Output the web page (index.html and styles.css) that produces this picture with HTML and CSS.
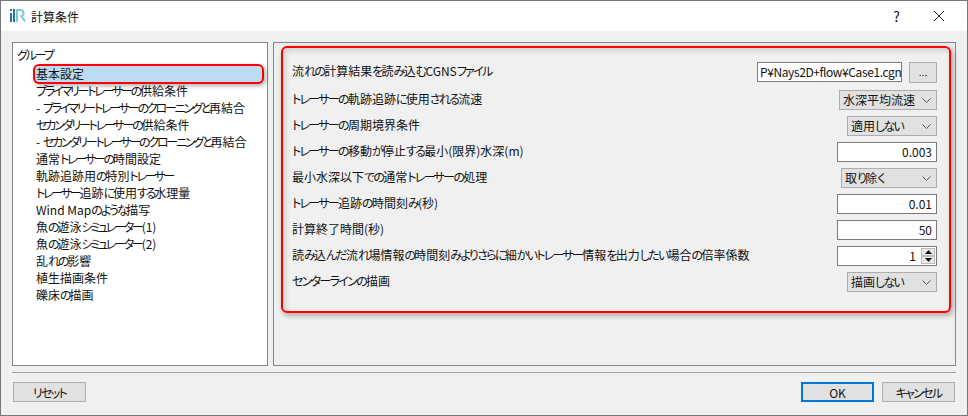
FILE: index.html
```html
<!DOCTYPE html>
<html lang="ja">
<head>
    <meta charset="UTF-8">
    <meta name="viewport" content="width=device-width, initial-scale=1.0">
    <title>計算条件</title>
    <link rel="stylesheet" href="styles.css">
</head>
<body>
    <div class="dialog">
        <div class="titlebar">
            <svg class="app-icon" width="16" height="16" viewBox="0 0 16 16">
                <rect x="0" y="1" width="2" height="2" fill="#2a6fb0"/>
                <rect x="0" y="5" width="2" height="9" fill="#2a6fb0"/>
                <rect x="3" y="1" width="2" height="13" fill="#2a6fb0"/>
                <path d="M7 14V2h3.5a3.2 3.2 0 0 1 1 6.2L15 13.5" fill="none" stroke="#7cc6dc" stroke-width="2"/>
            </svg>
            <span class="title">計算条件</span>
            <span class="help">?</span>
            <svg class="close" width="12" height="12" viewBox="0 0 12 12">
                <path d="M1 1l10 10M11 1L1 11" stroke="#222" stroke-width="1" fill="none"/>
            </svg>
        </div>

        <div class="content">
            <div class="group-panel">
                <div class="group-head"><span class="k">グループ</span></div>
                <ul class="group-list">
                    <li class="selected">基本設定</li>
                    <li><span class="k">プライマリートレーサーの</span>供給条件</li>
                    <li>- <span class="k">プライマリートレーサーのクローニングと</span>再結合</li>
                    <li><span class="k">セカンダリートレーサーの</span>供給条件</li>
                    <li>- <span class="k">セカンダリートレーサーのクローニングと</span>再結合</li>
                    <li>通常<span class="k">トレーサーの</span>時間設定</li>
                    <li>軌跡追跡用<span class="k">の</span>特別<span class="k">トレーサー</span></li>
                    <li><span class="k">トレーサー</span>追跡<span class="k">に</span>使用<span class="k">する</span>水理量</li>
                    <li>Wind Map<span class="k">のような</span>描写</li>
                    <li>魚<span class="k">の</span>遊泳<span class="k">シミュレーター</span>(1)</li>
                    <li>魚<span class="k">の</span>遊泳<span class="k">シミュレーター</span>(2)</li>
                    <li>乱<span class="k">れの</span>影響</li>
                    <li>植生描画条件</li>
                    <li>礫床<span class="k">の</span>描画</li>
                </ul>
            </div>

            <div class="settings-panel">
                <div class="row row-file">
                    <span class="label">流<span class="k">れの</span>計算結果<span class="k">を</span>読<span class="k">み</span>込<span class="k">む</span>CGNS<span class="k">ファイル</span></span>
                    <span class="path-input">P¥Nays2D+flow¥Case1.cgn</span>
                    <button class="browse">...</button>
                </div>
                <div class="row">
                    <span class="label"><span class="k">トレーサーの</span>軌跡追跡<span class="k">に</span>使用<span class="k">される</span>流速</span>
                    <span class="select w-wide">水深平均流速<svg class="chevron" width="9" height="5" viewBox="0 0 9 5"><path d="M.5.5l4 4 4-4" fill="none" stroke="#555"/></svg></span>
                </div>
                <div class="row">
                    <span class="label"><span class="k">トレーサーの</span>周期境界条件</span>
                    <span class="select">適用<span class="k">しない</span><svg class="chevron" width="9" height="5" viewBox="0 0 9 5"><path d="M.5.5l4 4 4-4" fill="none" stroke="#555"/></svg></span>
                </div>
                <div class="row">
                    <span class="label"><span class="k">トレーサーの</span>移動<span class="k">が</span>停止<span class="k">する</span>最小(限界)水深(m)</span>
                    <span class="num-input">0.003</span>
                </div>
                <div class="row">
                    <span class="label">最小水深以下<span class="k">での</span>通常<span class="k">トレーサーの</span>処理</span>
                    <span class="select w-mid">取<span class="k">り</span>除<span class="k">く</span><svg class="chevron" width="9" height="5" viewBox="0 0 9 5"><path d="M.5.5l4 4 4-4" fill="none" stroke="#555"/></svg></span>
                </div>
                <div class="row">
                    <span class="label"><span class="k">トレーサー</span>追跡<span class="k">の</span>時間刻<span class="k">み</span>(秒)</span>
                    <span class="num-input">0.01</span>
                </div>
                <div class="row">
                    <span class="label">計算終了時間(秒)</span>
                    <span class="num-input">50</span>
                </div>
                <div class="row">
                    <span class="label">読<span class="k">み</span>込<span class="k">んだ</span>流<span class="k">れ</span>場情報<span class="k">の</span>時間刻<span class="k">みよりさらに</span>細<span class="k">かいトレーサー</span>情報<span class="k">を</span>出力<span class="k">したい</span>場合<span class="k">の</span>倍率係数</span>
                    <span class="num-input spin-input">1
                        <span class="spin">
                            <span class="spin-btn"><svg width="7" height="4" viewBox="0 0 7 4"><path d="M3.5 0L7 4H0z" fill="#111"/></svg></span>
                            <span class="spin-btn"><svg width="7" height="4" viewBox="0 0 7 4"><path d="M0 0h7L3.5 4z" fill="#111"/></svg></span>
                        </span>
                    </span>
                </div>
                <div class="row">
                    <span class="label"><span class="k">センターラインの</span>描画</span>
                    <span class="select">描画<span class="k">しない</span><svg class="chevron" width="9" height="5" viewBox="0 0 9 5"><path d="M.5.5l4 4 4-4" fill="none" stroke="#555"/></svg></span>
                </div>
                <div class="callout callout-form"></div>
            </div>
        </div>

        <div class="footer">
            <button class="btn"><span class="k">リセット</span></button>
            <span class="spacer"></span>
            <button class="btn btn-default">OK</button>
            <button class="btn"><span class="k">キャンセル</span></button>
        </div>
    </div>
</body>
</html>
```

FILE: styles.css
```css
html, body {
    margin: 0;
    padding: 0;
}
body {
    width: 968px;
    height: 416px;
    overflow: hidden;
    font-family: "Noto Sans CJK JP", "Noto Sans", sans-serif;
    font-size: 12px;
    font-feature-settings: "palt";
    color: #111;
}
/* kana runs are narrower than kanji in the original UI font */
.k {
    letter-spacing: -1.7px;
}
.group-panel .k {
    letter-spacing: -2.2px;
}
.dialog {
    box-sizing: border-box;
    width: 968px;
    height: 416px;
    border: 1px solid #777;
    background-color: #f0f0f0;
    display: flex;
    flex-direction: column;
}
.titlebar {
    height: 30px;
    background-color: #fff;
    display: flex;
    align-items: center;
    padding-left: 9px;
    flex-shrink: 0;
}
.app-icon {
    margin-right: 5px;
}
.title {
    flex: 1;
    font-size: 12px;
}
.help {
    font-size: 14px;
    margin-right: 33px;
}
.close {
    margin-right: 22px;
}
.content {
    display: flex;
    gap: 5px;
    height: 335px;
    padding: 11px 11px 0 11px;
    box-sizing: border-box;
    flex-shrink: 0;
}
.group-panel {
    position: relative;
    box-sizing: border-box;
    width: 256px;
    height: 100%;
    background-color: #fff;
    border: 1px solid #828790;
    padding: 2px 4px 0 4px;
}
.group-head {
    height: 19px;
    line-height: 19px;
}
.group-list {
    list-style: none;
    margin: 0;
    padding: 0 0 0 16px;
}
.group-list li {
    height: 17px;
    line-height: 17px;
    padding-left: 3px;
    white-space: nowrap;
}
.group-list .selected {
    position: relative;
    background-color: #bcdcf4;
    border-radius: 4px;
    box-shadow: 0 0 0 2px #f00, 2px 2px 4px 2px rgba(0, 0, 0, 0.3);
    margin: 2px 1px 0 2px;
    padding-left: 1px;
    height: 16px;
    line-height: 16px;
}
.settings-panel {
    position: relative;
    box-sizing: border-box;
    flex: 1;
    height: 100%;
    border: 1px solid #828790;
    padding: 19px 18px 0 18px;
}
.row {
    display: flex;
    justify-content: flex-end;
    align-items: center;
    height: 20px;
    margin-bottom: 6px;
}
.row-file {
    margin-bottom: 8px;
}
.label {
    margin-right: auto;
    margin-bottom: 3px;
    white-space: nowrap;
}
.path-input, .num-input {
    box-sizing: border-box;
    height: 20px;
    line-height: 18px;
    background-color: #fff;
    white-space: nowrap;
}
.path-input {
    width: 145px;
    border: 1px solid #7a7a7a;
    padding-left: 2px;
    margin-right: 7px;
    overflow: hidden;
    letter-spacing: -0.4px;
}
.num-input {
    width: 100px;
    border: 1px solid #7a7a7a;
    padding-right: 4px;
    text-align: right;
}
.spin-input {
    display: flex;
    justify-content: flex-end;
    padding-right: 1px;
}
.spin {
    display: flex;
    flex-direction: column;
    width: 14px;
    margin-left: 5px;
    height: 16px;
    margin-top: 1px;
}
.spin-btn {
    height: 8px;
    background-color: #e8e8e8;
    border: 1px solid #bbb;
    box-sizing: border-box;
    display: flex;
    align-items: center;
    justify-content: center;
}
.browse, .btn {
    font-family: inherit;
    font-size: 12px;
    font-feature-settings: "palt";
    color: #111;
    background-color: #e1e1e1;
    border: 1px solid #adadad;
    padding: 0;
}
.browse {
    width: 28px;
    height: 21px;
    line-height: 18px;
    font-size: 10px;
}
.select {
    box-sizing: border-box;
    width: 90px;
    height: 20px;
    line-height: 18px;
    background-color: #e1e1e1;
    border: 1px solid #adadad;
    padding-left: 3px;
    display: flex;
    align-items: center;
    position: relative;
    white-space: nowrap;
}
.w-wide {
    width: 98px;
}
.w-mid {
    width: 96px;
}
.chevron {
    margin-left: auto;
    margin-right: 5px;
}
.callout {
    position: absolute;
    box-sizing: border-box;
    border: 2px solid #f00;
    border-radius: 6px;
    box-shadow: 2px 2px 5px 1px rgba(0, 0, 0, 0.25), inset 2px 2px 5px 1px rgba(0, 0, 0, 0.12);
    pointer-events: none;
}
.callout-form {
    left: 7px;
    top: 3px;
    width: 670px;
    height: 267px;
}
.footer {
    margin: 6px 11px 0 11px;
    padding: 9px 1px 0 0;
    border-top: 1px solid #a0a0a0;
    display: flex;
    gap: 7px;
    align-items: flex-start;
}
.spacer {
    flex: 1;
}
.btn {
    box-sizing: border-box;
    width: 73px;
    height: 20px;
    margin-left: 1px;
}
.btn-default {
    border: 2px solid #0078d7;
}
```
